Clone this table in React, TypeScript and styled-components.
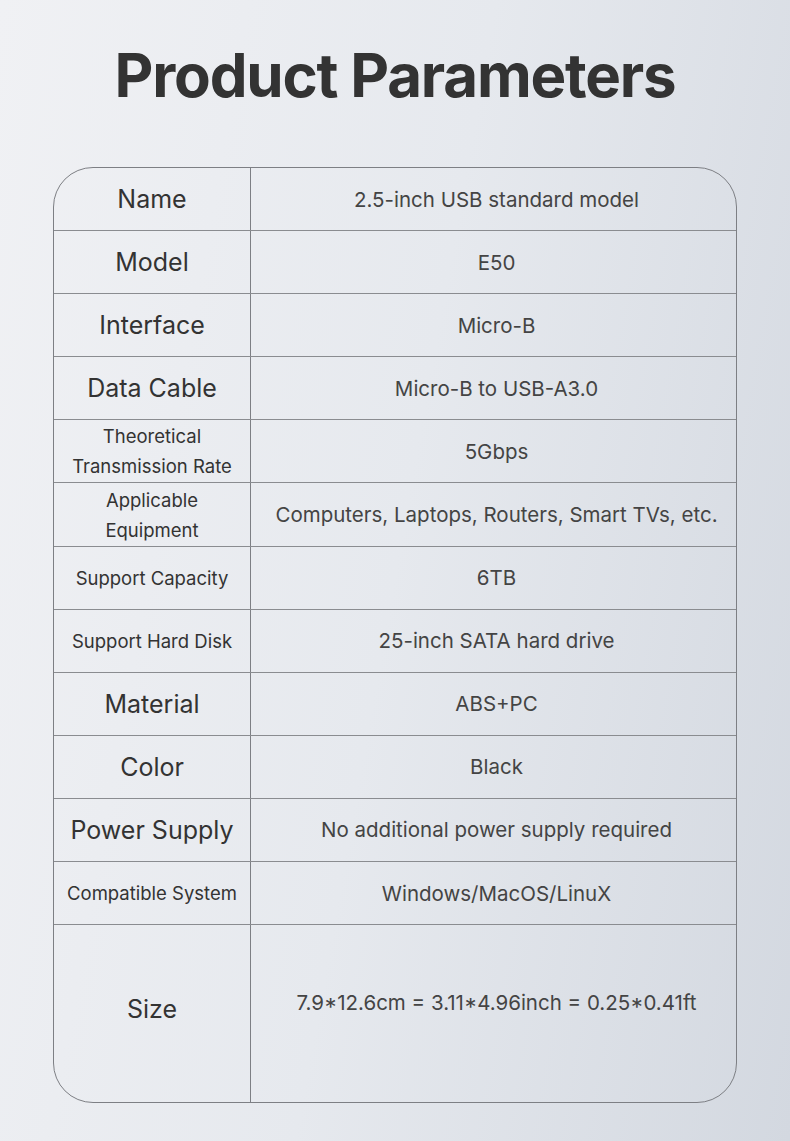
import styled, { createGlobalStyle } from 'styled-components';

const GlobalStyle = createGlobalStyle`
  html, body {
    margin: 0;
    padding: 0;
  }
  body {
    font-family: Inter, "Noto Sans", sans-serif;
  }
`;

type Row = { label: string; value: string; size?: 'lg' | 'sm'; tall?: boolean };

const rows: Row[] = [
  { label: 'Name', value: '2.5-inch USB standard model' },
  { label: 'Model', value: 'E50' },
  { label: 'Interface', value: 'Micro-B' },
  { label: 'Data Cable', value: 'Micro-B  to USB-A3.0' },
  { label: 'Theoretical\nTransmission Rate', value: '5Gbps', size: 'sm' },
  { label: 'Applicable\nEquipment', value: 'Computers, Laptops, Routers, Smart TVs, etc.', size: 'sm' },
  { label: 'Support Capacity', value: '6TB', size: 'sm' },
  { label: 'Support Hard Disk', value: '25-inch SATA hard drive', size: 'sm' },
  { label: 'Material', value: 'ABS+PC' },
  { label: 'Color', value: 'Black' },
  { label: 'Power Supply', value: 'No additional power supply required' },
  { label: 'Compatible System', value: 'Windows/MacOS/LinuX', size: 'sm' },
  { label: 'Size', value: '7.9*12.6cm = 3.11*4.96inch = 0.25*0.41ft', tall: true },
];

const App = () => {
  return (
    <Page>
      <GlobalStyle />
      <Title>Product Parameters</Title>
      <Table>
        {rows.map((r, i) => (
          <TableRow key={r.label} $tall={r.tall} $last={i === rows.length - 1}>
            <Label $size={r.size || 'lg'} $tall={r.tall}>{r.label}</Label>
            <Value $tall={r.tall}>{r.value}</Value>
          </TableRow>
        ))}
      </Table>
    </Page>
  );
};

const Page = styled.div`
  width: 790px;
  height: 1141px;
  box-sizing: border-box;
  padding-top: 35px;
  background: linear-gradient(100deg, #f0f1f4 0%, #e6e9ee 50%, #d3d8e0 100%);
  overflow: hidden;
`;

const Title = styled.h1`
  margin: 0;
  text-align: center;
  font-family: Inter, sans-serif;
  font-weight: 700;
  font-size: 60px;
  line-height: 80px;
  letter-spacing: -1.2px;
  color: #333333;
`;

const Table = styled.div`
  margin: 52px 0 0 53px;
  width: 684px;
  box-sizing: border-box;
  border: 1.3px solid #7d7f84;
  border-radius: 40px;
  overflow: hidden;
`;

const TableRow = styled.div<{ $tall?: boolean; $last?: boolean }>`
  display: grid;
  grid-template-columns: 197px 1fr;
  height: ${(p) => (p.$tall ? '177px' : '63.1px')};
  border-bottom: ${(p) => (p.$last ? 'none' : '1.3px solid #8a8c90')};
  box-sizing: border-box;
`;

const Label = styled.div<{ $size: 'lg' | 'sm'; $tall?: boolean }>`
  display: flex;
  align-items: center;
  justify-content: center;
  text-align: center;
  white-space: pre-line;
  border-right: 1.3px solid #7d7f84;
  color: #333333;
  font-size: ${(p) => (p.$size === 'lg' ? '25px' : '18.5px')};
  line-height: 30px;
  padding-bottom: ${(p) => (p.$tall ? '10px' : '0')};
`;

const Value = styled.div<{ $tall?: boolean }>`
  display: flex;
  align-items: center;
  justify-content: center;
  text-align: center;
  color: #444444;
  font-size: 20.5px;
  padding-left: 6px;
  padding-bottom: ${(p) => (p.$tall ? '22px' : '0')};
`;

export default App;
